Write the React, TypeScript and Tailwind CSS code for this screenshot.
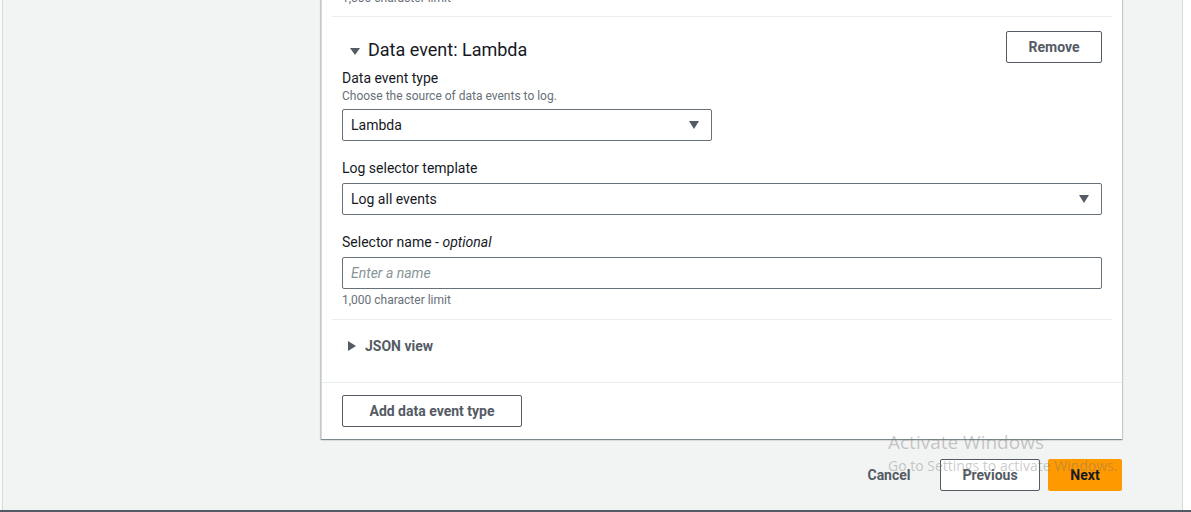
import React from 'react';

const Caret = ({ className = '' }: { className?: string }) => (
  <svg width="10" height="8" viewBox="0 0 10 8" className={className}>
    <path d="M0 0 H10 L5 8 Z" fill="#545b64" />
  </svg>
);

const Label = ({ children }: { children: React.ReactNode }) => (
  <div className="text-sm leading-5 text-[#16191f]">{children}</div>
);

const SelectBox = ({ value, className = '' }: { value: string; className?: string }) => (
  <div
    className={`mt-[5px] h-[32px] flex items-center justify-between pl-[8px] pr-[12px] border border-[#687078] rounded-[2px] bg-white text-sm text-[#16191f] ${className}`}
  >
    <span>{value}</span>
    <Caret />
  </div>
);

const App = (): JSX.Element => {
  return (
    <div className="relative w-[1191px] h-[512px] overflow-hidden flex flex-col bg-white font-['Roboto','Liberation_Sans',sans-serif]">
      <div className="flex flex-1 min-h-0">
        <div className="w-[2px] bg-[#fafafa]" />
        <main className="flex-1 bg-[#f2f3f3] border-l border-r border-[#d5dbdb] pl-[318px]">
          <div className="w-[801px]">
            {/* card */}
            <div className="bg-white border-l border-[#d5dbdb] shadow-[0_1px_1px_0_rgba(0,28,36,0.3),1px_1px_1px_0_rgba(0,28,36,0.15),-1px_1px_1px_0_rgba(0,28,36,0.15)]">
              <div className="px-[10px]">
                <div className="pb-[10px] border-b border-[#eaeded] px-[10px]">
                  <p className="-mt-[10px] text-xs leading-4 text-[#687078]">1,000 character limit</p>
                </div>

                <div className="pt-[14px] pb-[11px] border-b border-[#eaeded] px-[10px]">
                  <div className="flex items-start justify-between">
                    <div className="mt-[7px] flex items-center">
                      <svg width="10" height="7" viewBox="0 0 10 7" className="ml-[8px] mt-[2px]">
                        <path d="M0 0 H10 L5 7 Z" fill="#545b64" />
                      </svg>
                      <h2 className="ml-[8px] text-[18px] leading-6 text-[#16191f]">Data event: Lambda</h2>
                    </div>
                    <button className="w-[96px] h-[32px] border border-[#545b64] rounded-[2px] text-sm font-bold text-[#545b64]">
                      Remove
                    </button>
                  </div>

                  <div className="mt-[5px]">
                    <Label>Data event type</Label>
                    <div className="text-xs leading-4 text-[#687078]">Choose the source of data events to log.</div>
                    <SelectBox value="Lambda" className="w-[370px]" />
                  </div>

                  <div className="mt-[17px]">
                    <Label>Log selector template</Label>
                    <SelectBox value="Log all events" />
                  </div>

                  <div className="mt-[17px]">
                    <Label>
                      Selector name - <i>optional</i>
                    </Label>
                    <div className="mt-[5px] h-[32px] flex items-center pl-[8px] border border-[#687078] rounded-[2px] text-sm italic text-[#879596]">
                      Enter a name
                    </div>
                    <div className="mt-[3px] text-xs leading-4 text-[#687078]">1,000 character limit</div>
                  </div>
                </div>

                <div className="pt-[16px] pb-[26px] px-[10px]">
                  <div className="flex items-center">
                    <svg width="8" height="10" viewBox="0 0 8 10" className="ml-[6px]">
                      <path d="M0 0 L8 5 L0 10 Z" fill="#545b64" />
                    </svg>
                    <span className="ml-[9px] text-sm leading-5 font-bold text-[#545b64]">JSON view</span>
                  </div>
                </div>
              </div>

              <div className="border-t border-[#eaeded] px-[20px] py-[12px]">
                <button className="w-[180px] h-[32px] border border-[#545b64] rounded-[2px] text-sm font-bold text-[#545b64]">
                  Add data event type
                </button>
              </div>
            </div>

            {/* actions */}
            <div className="mt-[20px] flex justify-end gap-[8px]">
              <button className="w-[86px] h-[32px] text-sm font-bold text-[#545b64]">Cancel</button>
              <button className="w-[100px] h-[32px] border border-[#545b64] rounded-[2px] bg-white text-sm font-bold text-[#545b64]">
                Previous
              </button>
              <button className="w-[74px] h-[32px] rounded-[2px] bg-[#ff9900] text-sm font-bold text-[#16191f]">
                Next
              </button>
            </div>
          </div>
        </main>
        <div className="w-[8px] bg-white" />
      </div>
      <div className="h-[2px] bg-[#545b64]" />

      {/* Windows activation watermark */}
      <div className="absolute left-[888px] top-[430px] pointer-events-none font-['Open_Sans',sans-serif] text-[rgba(120,120,120,0.4)]">
        <div className="text-[19px] leading-6">Activate Windows</div>
        <div className="text-[14px] leading-4 mt-[4px]">Go to Settings to activate Windows.</div>
      </div>
    </div>
  );
};

export default App;
